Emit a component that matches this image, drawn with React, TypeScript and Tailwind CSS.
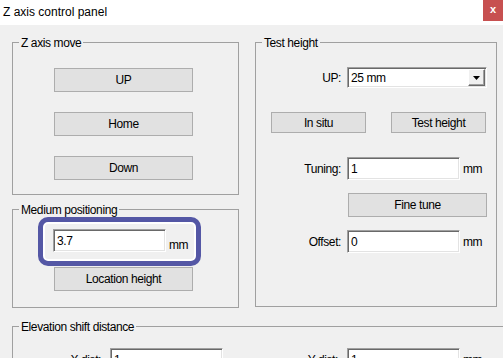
import React from 'react';

type GroupProps = {
  title: string;
  className?: string;
  children?: React.ReactNode;
};

const Group: React.FC<GroupProps> = ({ title, className, children }) => (
  <div className={`relative border border-[#a0a0a0] ${className ?? ''}`}>
    <span className="absolute left-[6px] top-[-7px] bg-[#f0f0f0] px-[2px] leading-[14px] whitespace-nowrap">
      {title}
    </span>
    {children}
  </div>
);

const WinButton: React.FC<{ label: string; className?: string }> = ({ label, className }) => (
  <button
    className={`flex items-center justify-center border border-[#adadad] bg-[#e1e1e1] leading-[14px] text-black ${className ?? ''}`}
  >
    {label}
  </button>
);

const TextBox: React.FC<{ value: string; className?: string }> = ({ value, className }) => (
  <div
    className={`flex items-center border border-t-[#a0a0a0] border-l-[#a0a0a0] border-b-white border-r-white bg-white pl-[3px] leading-[14px] shadow-[inset_1px_1px_0_#696969,inset_-1px_-1px_0_#e3e3e3] ${className ?? ''}`}
  >
    {value}
  </div>
);

const FieldLabel: React.FC<{ text: string; className?: string }> = ({ text, className }) => (
  <span className={`text-right leading-[14px] whitespace-nowrap ${className ?? ''}`}>{text}</span>
);

export default function App() {
  return (
    <div className="h-[358px] w-[503px] overflow-hidden bg-[#f0f0f0] font-['Liberation_Sans',Arial,sans-serif] text-[12px] tracking-[-0.4px] text-black">
      {/* title bar */}
      <div className="flex h-[25px] items-start justify-between bg-white">
        <span className="pl-[3px] pt-[5px] leading-[14px] tracking-normal">Z axis control panel</span>
        <div className="flex h-[21px] w-[20px] items-center justify-center bg-[#c75050] pb-[2px] text-[11px] font-bold leading-none tracking-normal text-white">
          x
        </div>
      </div>

      <div className="flex flex-col pl-[12px] pt-[17px]">
        <div className="flex items-start gap-[16px]">
          <div className="flex w-[227px] flex-col gap-[14px]">
            <Group title="Z axis move" className="h-[153px]">
              <div className="flex flex-col gap-[20px] pl-[41px] pt-[25px]">
                <WinButton label="UP" className="h-[24px] w-[139px]" />
                <WinButton label="Home" className="h-[24px] w-[139px]" />
                <WinButton label="Down" className="h-[24px] w-[139px]" />
              </div>
            </Group>

            <Group title="Medium positioning" className="h-[99px]">
              <div className="flex flex-col pt-[7px]">
                <div className="ml-[25px] flex h-[49px] w-[163px] items-start rounded-[10px] border-[5px] border-[#5457a5] pl-[10px] pt-[7px] shadow-[inset_0_0_0_2px_#ffffff]">
                  <TextBox value="3.7" className="h-[23px] w-[113px]" />
                  <span className="ml-[3px] self-center leading-[14px]">mm</span>
                </div>
                <WinButton label="Location height" className="ml-[41px] mt-[1px] h-[24px] w-[139px]" />
              </div>
            </Group>
          </div>

          <Group title="Test height" className="h-[265px] w-[242px]">
            <div className="flex flex-col">
              <div className="mt-[24px] flex items-center">
                <FieldLabel text="UP:" className="w-[85px]" />
                <div className="ml-[6px] flex h-[21px] w-[140px] border border-t-[#a0a0a0] border-l-[#a0a0a0] border-b-white border-r-white bg-white shadow-[inset_1px_1px_0_#696969,inset_-1px_-1px_0_#e3e3e3]">
                  <span className="flex flex-1 items-center pl-[3px] leading-[14px]">25 mm</span>
                  <div className="my-[1px] mr-[1px] flex w-[17px] items-center justify-center border border-t-white border-l-white border-b-[#696969] border-r-[#696969] bg-[#f0f0f0] shadow-[inset_-1px_-1px_0_#a0a0a0]">
                    <svg width="7" height="4" viewBox="0 0 7 4">
                      <polygon points="0,0 7,0 3.5,4" fill="#000" />
                    </svg>
                  </div>
                </div>
              </div>

              <div className="mt-[24px] flex gap-[25px] pl-[15px]">
                <WinButton label="In situ" className="h-[21px] w-[95px]" />
                <WinButton label="Test height" className="h-[21px] w-[95px]" />
              </div>

              <div className="mt-[24px] flex items-center">
                <FieldLabel text="Tuning:" className="w-[85px]" />
                <TextBox value="1" className="ml-[6px] h-[23px] w-[113px]" />
                <span className="ml-[3px] leading-[14px]">mm</span>
              </div>

              <WinButton label="Fine tune" className="ml-[92px] mt-[13px] h-[24px] w-[139px]" />

              <div className="mt-[13px] flex items-center">
                <FieldLabel text="Offset:" className="w-[85px]" />
                <TextBox value="0" className="ml-[6px] h-[23px] w-[113px]" />
                <span className="ml-[3px] leading-[14px]">mm</span>
              </div>
            </div>
          </Group>
        </div>

        <Group title="Elevation shift distance" className="mt-[18px] h-[60px] w-[500px]">
          <div className="flex items-center pt-[21px]">
            <FieldLabel text="X dist:" className="w-[88px]" />
            <TextBox value="1" className="ml-[9px] h-[23px] w-[113px]" />
            <FieldLabel text="Y dist:" className="w-[115px]" />
            <TextBox value="1" className="ml-[9px] h-[23px] w-[113px]" />
            <span className="ml-[3px] leading-[14px]">mm</span>
          </div>
        </Group>
      </div>
    </div>
  );
}
